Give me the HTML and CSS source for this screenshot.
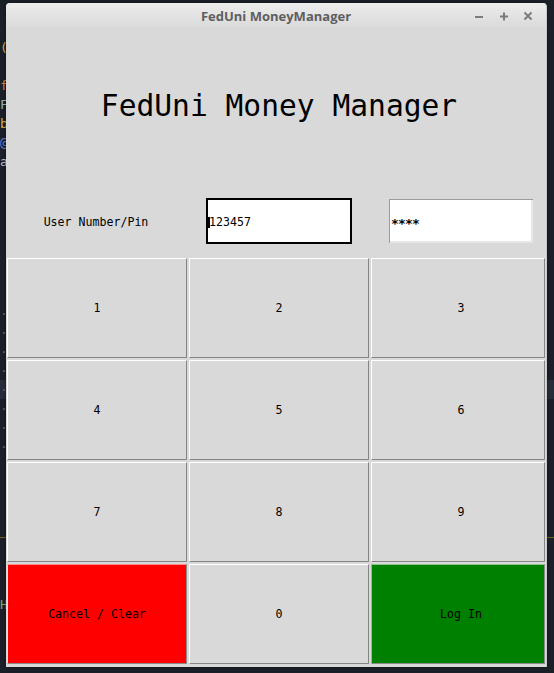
FILE: index.html
```html
<!DOCTYPE html>
<html lang="en">
<head>
<meta charset="utf-8">
<title>FedUni MoneyManager</title>
<link rel="stylesheet" href="styles.css">
</head>
<body>
<div class="desktop">
  <div class="editor">
    <div class="ln"></div>
    <div class="ln"></div>
    <div class="ln c-yellow">(</div>
    <div class="ln"></div>
    <div class="ln c-orange">f</div>
    <div class="ln c-teal">F</div>
    <div class="ln c-yellow">b</div>
    <div class="ln c-blue">@</div>
    <div class="ln c-grey">a</div>
    <div class="ln"></div>
    <div class="ln"></div>
    <div class="ln"></div>
    <div class="ln"></div>
    <div class="ln"></div>
    <div class="ln"></div>
    <div class="ln"></div>
    <div class="ln c-dot">·</div>
    <div class="ln c-dot">·</div>
    <div class="ln c-dot">·</div>
    <div class="ln c-dot">·</div>
    <div class="ln current c-dot">·</div>
    <div class="ln c-dot">·</div>
    <div class="ln c-dot">·</div>
    <div class="ln c-dot">·</div>
    <div class="ln"></div>
    <div class="ln"></div>
    <div class="ln"></div>
    <div class="ln guide"></div>
    <div class="ln"></div>
    <div class="ln"></div>
    <div class="ln"></div>
    <div class="ln c-green">H</div>
  </div>

  <div class="window">
    <div class="titlebar">
      <span class="title">FedUni MoneyManager</span>
      <div class="controls">
        <svg class="ctl" width="12" height="12" viewBox="0 0 12 12"><path d="M2 7h8" stroke="#7c7c7c" stroke-width="2"/></svg>
        <svg class="ctl" width="12" height="12" viewBox="0 0 12 12"><path d="M2 6.5h8M6 2.5v8" stroke="#7c7c7c" stroke-width="2"/></svg>
        <svg class="ctl" width="12" height="12" viewBox="0 0 12 12"><path d="M2.5 2.5l7 7M9.5 2.5l-7 7" stroke="#7c7c7c" stroke-width="2"/></svg>
      </div>
    </div>
    <div class="app">
      <h1 class="heading">FedUni Money Manager</h1>
      <div class="grid">
        <div class="label">User Number/Pin</div>
        <div class="entry focused"><span class="caret"></span>123457</div>
        <div class="entry idle"><span class="stars">****</span></div>

        <button class="key">1</button>
        <button class="key">2</button>
        <button class="key right">3</button>
        <button class="key">4</button>
        <button class="key">5</button>
        <button class="key right">6</button>
        <button class="key">7</button>
        <button class="key">8</button>
        <button class="key right">9</button>
        <button class="key cancel">Cancel / Clear</button>
        <button class="key">0</button>
        <button class="key right login">Log In</button>
      </div>
    </div>
  </div>
</div>
</body>
</html>
```

FILE: styles.css
```css
* { box-sizing: border-box; }

html, body {
  margin: 0;
  padding: 0;
  width: 554px;
  height: 673px;
  overflow: hidden;
  background: #1b1f27;
}

.desktop {
  position: relative;
  width: 554px;
  height: 673px;
}

.editor {
  padding-top: 0;
  font-family: "DejaVu Sans Mono", monospace;
  font-size: 13px;
}

.ln {
  height: 19px;
  line-height: 19px;
  padding-left: 0;
  white-space: pre;
}

.ln.current { background: #262c38; }
.ln.guide { border-bottom: 1px solid #6b6326; height: 25px; }

.c-yellow { color: #c9b43c; }
.c-orange { color: #d08a3a; }
.c-teal { color: #8fb3b0; }
.c-blue { color: #5b7fd0; }
.c-grey { color: #b8bcc4; }
.c-dot { color: #56657a; }
.c-green { color: #7fa860; }

.window {
  position: absolute;
  left: 6px;
  top: 3px;
  width: 541px;
  height: 664px;
  background: #d9d9d9;
  border-radius: 4px 4px 0 0;
  overflow: hidden;
  border-right: 1px solid #c9c9c9;
  box-shadow: 0 0 3px rgba(0, 0, 0, 0.5);
  display: flex;
  flex-direction: column;
}

.titlebar {
  height: 25px;
  flex: none;
  background: linear-gradient(#ececec, #dadada);
  display: grid;
  grid-template-columns: 1fr auto 1fr;
  align-items: center;
}

.title {
  grid-column: 2;
  font-family: "Open Sans", "Noto Sans", sans-serif;
  font-weight: 700;
  font-size: 13px;
  color: #5e5e5e;
  padding-top: 1px;
}

.controls {
  grid-column: 3;
  justify-self: end;
  display: flex;
  gap: 12.5px;
  padding-right: 12px;
  padding-top: 1px;
}

.ctl { display: block; }

.app {
  flex: 1;
  display: flex;
  flex-direction: column;
  width: 540px;
}

.heading {
  margin: 0;
  height: 158px;
  display: flex;
  align-items: center;
  justify-content: center;
  padding-left: 6px;
  padding-bottom: 2px;
  font-family: "DejaVu Sans Mono", monospace;
  font-weight: 400;
  font-size: 29.6px;
  color: #000;
}

.grid {
  display: grid;
  grid-template-columns: 182px 182px 176px;
  grid-template-rows: 71px repeat(4, 102px);
  font-family: "DejaVu Sans Mono", monospace;
  font-size: 11.6px;
  color: #000;
}

.label {
  display: flex;
  align-items: center;
  justify-content: center;
  padding-right: 2px;
}

.entry {
  justify-self: start;
  align-self: start;
  margin-left: 18px;
  margin-top: 12px;
  width: 146px;
  height: 46px;
  background: #fff;
  display: flex;
  align-items: center;
  white-space: pre;
}

.entry.focused {
  border: 2px solid #000;
  padding-left: 0;
  padding-top: 2px;
}

.caret {
  display: inline-block;
  width: 2px;
  height: 11px;
  background: #000;
  margin-right: -1px;
}

.entry.idle {
  border: 1px solid #d9d9d9;
  box-shadow: inset 1px 1px 0 #9c9c9c, inset -2px -2px 0 #e6e6e6;
  padding-left: 2px;
}

.stars {
  font-weight: 700;
  font-size: 13px;
  letter-spacing: -0.8px;
  display: inline-block;
  transform: translateY(2px);
}

.key {
  margin: 1px;
  padding: 0;
  background: #d9d9d9;
  border: 1px solid;
  border-color: #ffffff #858585 #858585 #ffffff;
  font-family: "DejaVu Sans Mono", monospace;
  font-size: 11.6px;
  color: #000;
  white-space: pre;
}

.key.right {
  padding-left: 6px;
}

.key.cancel {
  background: #ff0000;
  border-color: #ff8c8c #8a8a8a #8a8a8a #ffd0d0;
}

.key.login {
  background: #008000;
  border-color: #8cc48c #8a8a8a #8a8a8a #8cc48c;
}
```
